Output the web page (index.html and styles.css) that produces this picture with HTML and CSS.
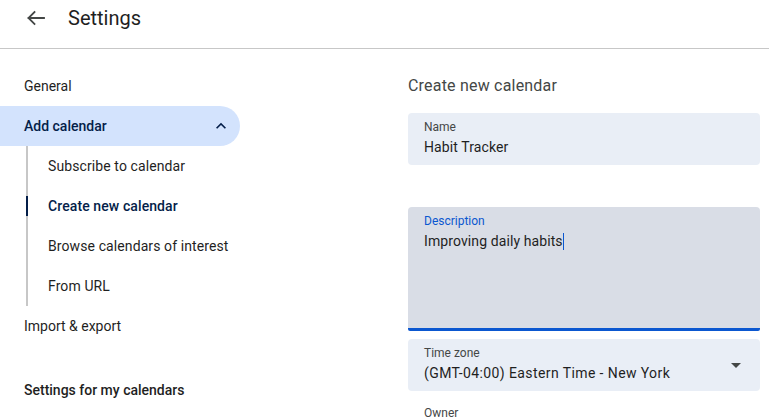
FILE: index.html
```html
<!DOCTYPE html>
<html>
<head>
<meta charset="utf-8">
<link rel="stylesheet" href="styles.css">
</head>
<body>
<header class="topbar">
  <svg class="back" width="24" height="24" viewBox="0 0 24 24"><path d="M20 12H4.5M10.5 6 4.5 12l6 6" fill="none" stroke="#444746" stroke-width="1.8" stroke-linecap="square"/></svg>
  <h1 class="title">Settings</h1>
</header>
<div class="main">
  <nav class="nav">
    <div class="nav-item">General</div>
    <div class="nav-item open">
      <span>Add calendar</span>
      <svg width="20" height="20" viewBox="0 0 24 24"><path d="M12 8l-6 6 1.41 1.41L12 10.83l4.59 4.58L18 14z" fill="#041e49"/></svg>
    </div>
    <ul class="sub">
      <li>Subscribe to calendar</li>
      <li class="active">Create new calendar</li>
      <li>Browse calendars of interest</li>
      <li>From URL</li>
    </ul>
    <div class="nav-item">Import &amp; export</div>
    <div class="nav-item section">Settings for my calendars</div>
  </nav>
  <section class="content">
    <h2 class="heading">Create new calendar</h2>
    <div class="field">
      <div class="label">Name</div>
      <div class="value">Habit Tracker</div>
    </div>
    <div class="field desc">
      <div class="label">Description</div>
      <div class="value">Improving daily habits<span class="caret"></span></div>
    </div>
    <div class="field select">
      <div>
        <div class="label">Time zone</div>
        <div class="value tz">(GMT-04:00) Eastern Time - New York</div>
      </div>
      <svg width="24" height="24" viewBox="0 0 24 24"><path d="M7 10l5 5 5-5z" fill="#444746"/></svg>
    </div>
    <div class="owner">Owner</div>
  </section>
</div>
</body>
</html>
```

FILE: styles.css
```css
* { box-sizing: border-box; }
html, body { margin: 0; padding: 0; }
body {
  font-family: Roboto, "Noto Sans", Arial, sans-serif;
  color: #1f1f1f;
  background: #fff;
  width: 769px;
  height: 418px;
  overflow: hidden;
}
.topbar {
  height: 49px;
  display: flex;
  align-items: center;
  padding: 0 0 12px 24px;
  border-bottom: 1px solid #c7c7c7;
}
.back { display: block; }
.title {
  margin: 0 0 0 20px;
  font-size: 20px;
  font-weight: 400;
  color: #1f1f1f;
  line-height: 24px;
}
.main { display: flex; }
.nav {
  width: 240px;
  flex: none;
  padding-top: 17px;
}
.nav-item {
  height: 40px;
  display: flex;
  align-items: center;
  justify-content: space-between;
  padding: 0 9px 0 24px;
  font-size: 14px;
  color: #1f1f1f;
}
.nav-item.open {
  background: #d3e3fd;
  border-radius: 0 20px 20px 0;
  color: #041e49;
  font-weight: 500;
}
.nav-item.open svg { display: block; }
.nav-item.section {
  margin-top: 24px;
  font-weight: 500;
}
.sub {
  list-style: none;
  margin: 10px 0 10px 26px;
  padding: 0;
  border-left: 2px solid #c7c7c7;
}
.sub li {
  position: relative;
  height: 40px;
  display: flex;
  align-items: center;
  padding-left: 20px;
  font-size: 14px;
  color: #1f1f1f;
  letter-spacing: 0.1px;
}
.sub li:first-child { margin-top: -10px; }
.sub li:last-child { margin-bottom: -10px; }
.sub li.active { color: #041e49; font-weight: 500; }
.sub li.active::before {
  content: "";
  position: absolute;
  left: -2px;
  top: 10px;
  bottom: 10px;
  width: 2px;
  background: #041e49;
}
.content {
  margin-left: 168px;
  width: 352px;
  padding-top: 27px;
}
.heading {
  margin: 0 0 17px;
  font-size: 16px;
  font-weight: 400;
  color: #444746;
  line-height: 20px;
  letter-spacing: 0.2px;
}
.field {
  background: #e9eef6;
  border-radius: 4px;
  height: 52px;
  padding: 6px 16px 0;
  margin-bottom: 42px;
}
.label {
  font-size: 12px;
  line-height: 16px;
  color: #444746;
}
.value {
  font-size: 14px;
  line-height: 20px;
  margin-top: 2px;
  color: #1f1f1f;
  letter-spacing: 0.1px;
}
.value.tz { letter-spacing: 0.4px; }
.desc {
  height: 124px;
  background: #d9dde6;
  border-bottom: 3px solid #0b57d0;
  border-radius: 4px 4px 2px 2px;
  margin-bottom: 8px;
}
.desc .label { color: #0b57d0; }
.caret {
  display: inline-block;
  width: 1px;
  height: 17px;
  background: #0b57d0;
  vertical-align: -4px;
}
.select {
  display: flex;
  justify-content: space-between;
  align-items: flex-start;
  padding-right: 12px;
  margin-bottom: 0;
}
.select svg { margin-top: 8px; display: block; }
.owner {
  margin-top: 14px;
  padding-left: 16px;
  font-size: 12px;
  line-height: 16px;
  color: #444746;
}
```
